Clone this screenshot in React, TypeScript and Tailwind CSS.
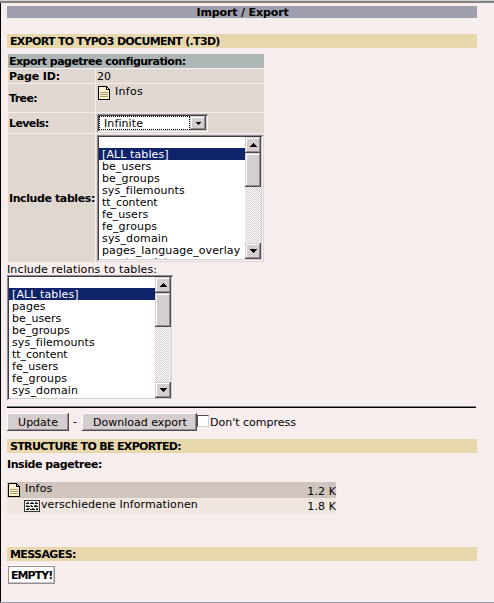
import React from "react";

const bevel = "bg-[#d6cece] shadow-[inset_-1px_-1px_#524a52,inset_1px_1px_#d6cece,inset_-2px_-2px_#948c94,inset_2px_2px_#fff]";
const button = "bg-[#d6cece] shadow-[inset_-1px_-1px_#524a52,inset_1px_1px_#fff,inset_-2px_-2px_#948c94]";
const sunken = "p-[2px] bg-white shadow-[inset_1px_1px_#948c94,inset_-1px_-1px_#f7f3f3,inset_2px_2px_#423c42,inset_-2px_-2px_#d6cece]";
const cell = "bg-[#dfd7d0]";

function PageIcon() {
  return (
    <svg width="12" height="14" viewBox="0 0 12 14" shapeRendering="crispEdges" className="block shrink-0">
      <path d="M0 0H9V1H10V2H11V3H12V14H0Z" fill="#000" />
      <path d="M1 1H8V4H11V13H1Z" fill="#fff3ce" />
      <path d="M9 2H10V3H9Z" fill="#fff" />
      <path d="M2 6H10V7H2ZM2 8H10V9H2ZM2 10H10V11H2Z" fill="#ad9a6b" />
    </svg>
  );
}

function ContentIcon() {
  return (
    <svg width="16" height="12" viewBox="0 0 16 12" shapeRendering="crispEdges" className="block shrink-0">
      <path d="M0 0H16V12H0Z" fill="#393139" />
      <path d="M1 1H15V11H1Z" fill="#eff7ef" />
      <path d="M2 3.5H5M6 3.5H10M11 3.5H14M2 6.5H6M7 6.5H9M10 6.5H14M2 9.5H5M6 9.5H11M12 9.5H14" stroke="#101010" />
      <path d="M3 2.5H5M7 2.5H9M11 2.5H13M2 5.5H4M6 5.5H8M10 5.5H13M3 8.5H6M8 8.5H10M12 8.5H14" stroke="#5a635a" />
    </svg>
  );
}

function Arrow({ up }: { up?: boolean }) {
  return (
    <svg width="7" height="4" viewBox="0 0 7 4" shapeRendering="crispEdges" className="block">
      <path d={up ? "M3 0H4V1H5V2H6V3H7V4H0V3H1V2H2V1H3Z" : "M0 0H7V1H6V2H5V3H4V4H3V3H2V2H1V1H0Z"} fill="#000" />
    </svg>
  );
}

function ScrollButton({ up }: { up?: boolean }) {
  return (
    <div className={"flex h-4 w-4 shrink-0 items-center justify-center " + bevel}>
      <Arrow up={up} />
    </div>
  );
}

function ListBox({ items, height }: { items: [string, string][]; height: string }) {
  return (
    <div className={"flex w-[166px] " + sunken + " " + height}>
      <div className="min-w-0 flex-1 overflow-hidden">
        <div className="h-[11px]" />
        {items.map(([name, track], i) => (
          <div
            key={name}
            className={"h-3 whitespace-nowrap pl-[3px] leading-[13px] " + track + (i === 0 ? " bg-[#10246b] text-white" : "")}
          >
            {name}
          </div>
        ))}
      </div>
      <div className="flex w-4 flex-col bg-[conic-gradient(#fff_25%,#d6cece_0_50%,#fff_0_75%,#d6cece_0)] bg-[length:2px_2px]">
        <ScrollButton up />
        <div className={"h-[34px] shrink-0 " + bevel} />
        <div className="flex-1" />
        <ScrollButton />
      </div>
    </div>
  );
}

const tables: [string, string][] = [
  ["[ALL tables]", "tracking-[0.1px]"],
  ["be_users", "tracking-[0.05px]"],
  ["be_groups", "tracking-[0.1px]"],
  ["sys_filemounts", "tracking-[0.08px]"],
  ["tt_content", "tracking-[-0.07px]"],
  ["fe_users", "tracking-[0.05px]"],
  ["fe_groups", "tracking-[0.15px]"],
  ["sys_domain", "tracking-[0.15px]"],
  ["pages_language_overlay", "tracking-[0.09px]"],
  ["sys_template", ""],
];
const relations: [string, string][] = [tables[0], ["pages", "tracking-[0.1px]"], ...tables.slice(1, 9)];

function Section({ children, className }: { children: React.ReactNode; className: string }) {
  return <div className={"h-[14px] w-[470px] whitespace-nowrap bg-[#e6d7ad] pl-[3px] font-bold leading-[15px] " + className}>{children}</div>;
}

export default function App() {
  return (
    <div className="flex h-[603px] w-[494px] flex-col overflow-hidden border-b border-[#9c9cb0] bg-[#f7eded] font-['DejaVu_Sans',Verdana,sans-serif] text-[11px] leading-3 text-black">
      <div className="h-[3px] shrink-0 border-b-2 border-[#848484] bg-[#ced3ce]" />
      <div className="min-h-0 flex-1 border-l border-black pl-[6px] pt-[3px]">
        <div className="h-3 w-[470px] bg-[#9f9eae] pl-px text-center font-bold leading-[14px] tracking-[-0.13px]">Import / Export</div>
        <Section className="mt-4 tracking-[-0.68px]">EXPORT TO TYPO3 DOCUMENT (.T3D)</Section>

        <div className="ml-px mt-[6px] grid w-[256px] grid-cols-[87px_168px] grid-rows-[14px_14px_28px_20px_128px] gap-px whitespace-nowrap">
          <div className="col-span-2 bg-[#adb6b5] pl-px font-bold leading-[15px] tracking-[-0.53px]">Export pagetree configuration:</div>
          <div className={"pl-px font-bold leading-[15px] tracking-[-0.12px] " + cell}>Page ID:</div>
          <div className={"pl-px leading-[15px] " + cell}>20</div>
          <div className={"flex items-center pl-px pt-[2px] font-bold tracking-[-0.6px] " + cell}>Tree:</div>
          <div className={"flex pl-[2px] pt-[2px] " + cell}>
            <PageIcon />
            <span className="pl-[5px] tracking-[0.3px]">Infos</span>
          </div>
          <div className={"flex items-center pl-px pt-[2px] font-bold tracking-[-0.6px] " + cell}>Levels:</div>
          <div className={"pl-px pt-px " + cell}>
            <div className={"flex h-[18px] w-[111px] " + sunken}>
              <div className="min-w-0 flex-1 border border-dotted border-black pl-1 leading-[13px] tracking-[0.1px]">Infinite</div>
              <div className={"flex w-4 items-center justify-center pt-px " + bevel}>
                <svg width="5" height="3" viewBox="0 0 5 3" shapeRendering="crispEdges">
                  <path d="M0 0H5V1H4V2H3V3H2V2H1V1H0Z" />
                </svg>
              </div>
            </div>
          </div>
          <div className={"flex items-center pl-px pt-[2px] font-bold tracking-[-0.4px] " + cell}>Include tables:</div>
          <div className={"pl-px pt-px " + cell}>
            <ListBox items={tables} height="h-[126px]" />
          </div>
        </div>

        <div className="mt-[2px] h-[11px] whitespace-nowrap tracking-[0.13px]">Include relations to tables:</div>
        <ListBox items={relations} height="h-[125px]" />
        <div className="mt-[6px] h-[2px] w-[469px] border-t border-[#848484] bg-black" />

        <div className="mt-[5px] flex h-[18px] whitespace-nowrap">
          <button className={"w-[62px] pt-px leading-[17px] " + button}>Update</button>
          <span className="w-[13px] pl-1 pt-[3px]">-</span>
          <button className={"w-[115px] pl-px pt-px leading-[17px] " + button}>Download export</button>
          <div className="mt-[2px] h-3 w-3 border border-t-[#524a52] border-l-[#524a52] border-r-[#d6cece] border-b-[#d6cece] bg-white" />
          <span className="pl-px pt-1">Don't compress</span>
        </div>

        <Section className="mt-2 tracking-[-0.66px]">STRUCTURE TO BE EXPORTED:</Section>
        <div className="mt-[5px] h-6 whitespace-nowrap font-bold leading-[14px] tracking-[-0.44px]">Inside pagetree:</div>
        <div className="flex h-4 w-[329px] bg-[#cfc5be] pl-px pt-px">
          <PageIcon />
          <span className="flex-1 pl-[5px] leading-3 tracking-[0.2px]">Infos</span>
          <span className="pt-[3px] tracking-[0.1px]">1.2 K</span>
        </div>
        <div className="flex h-4 w-[329px] bg-[#efe6df] pl-[17px]">
          <div className="pt-[2px]">
            <ContentIcon />
          </div>
          <span className="flex-1 pl-px pt-px leading-3 tracking-[0.08px]">verschiedene Informationen</span>
          <span className="pt-[3px] tracking-[0.1px]">1.8 K</span>
        </div>
        <Section className="mt-[33px] tracking-[-0.6px]">MESSAGES:</Section>
        <div className="ml-px mt-[5px] h-[18px] w-[47px] whitespace-nowrap border border-[#948c94] bg-white pl-[2px] font-bold leading-[17px] tracking-[-0.95px] shadow-[inset_-1px_-1px_#cec6c6,0_-1px_#fff]">EMPTY!</div>
      </div>
    </div>
  );
}
